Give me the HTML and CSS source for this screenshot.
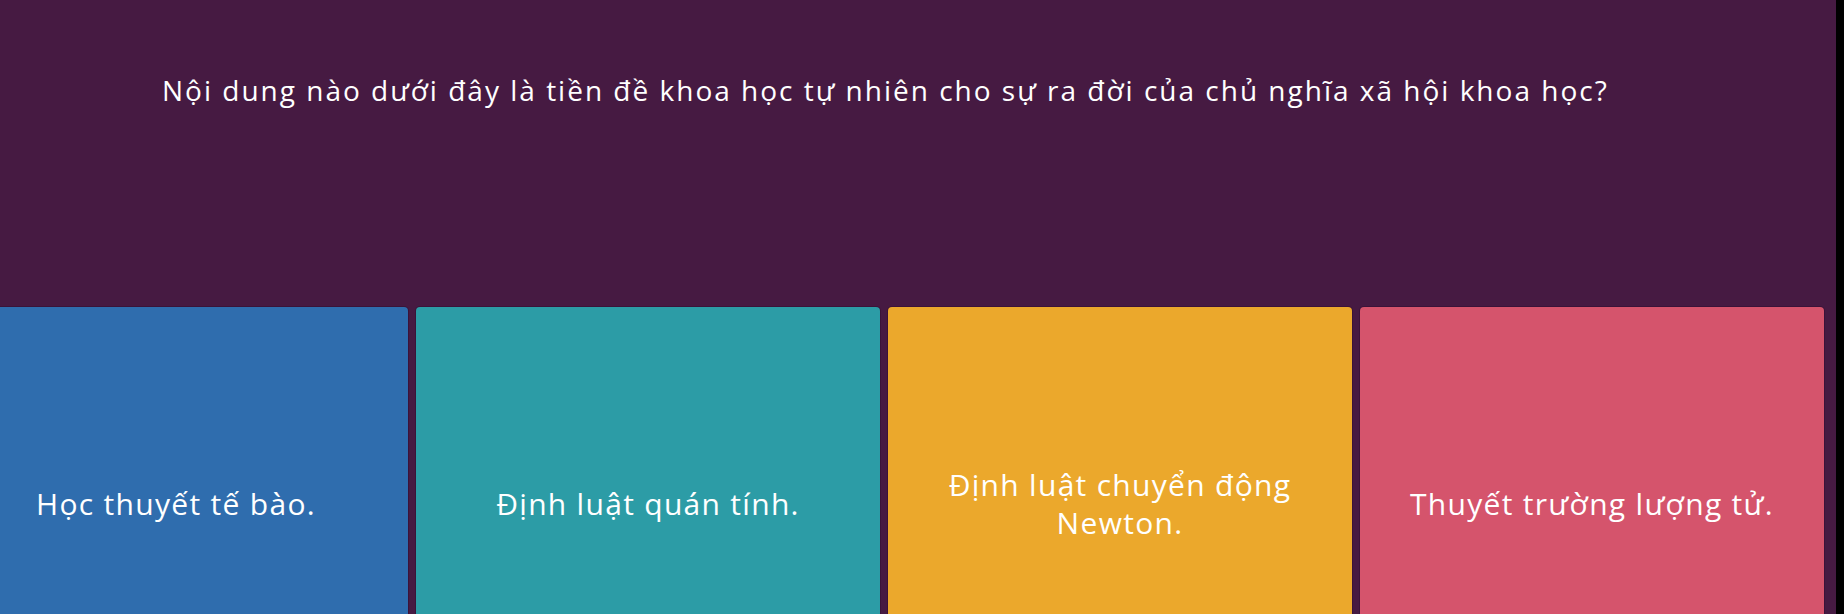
FILE: index.html
```html
<!DOCTYPE html>
<html lang="vi">
<head>
<meta charset="utf-8">
<title>Quiz</title>
<link rel="stylesheet" href="styles.css">
</head>
<body>
<div class="stage">
  <div class="question">
    <p class="question-text">Nội dung nào dưới đây là tiền đề khoa học tự nhiên cho sự ra đời của chủ nghĩa xã hội khoa học?</p>
  </div>
  <div class="options">
    <div class="option option-blue"><span>Học thuyết tế bào.</span></div>
    <div class="option option-teal"><span>Định luật quán tính.</span></div>
    <div class="option option-yellow"><span>Định luật chuyển động Newton.</span></div>
    <div class="option option-red"><span>Thuyết trường lượng tử.</span></div>
  </div>
</div>
<div class="edge"></div>
</body>
</html>
```

FILE: styles.css
```css
html, body {
  margin: 0;
  padding: 0;
  height: 100%;
}
body {
  display: flex;
  overflow: hidden;
  background: #461a42;
  font-family: "Open Sans", "Noto Sans", sans-serif;
  color: #ffffff;
}
.stage {
  flex: 1;
  display: flex;
  flex-direction: column;
  min-width: 0;
}
.edge {
  width: 8px;
  flex-shrink: 0;
  background: #000000;
}
.question {
  height: 307px;
  flex-shrink: 0;
  box-sizing: border-box;
  padding: 73px 0 0 162px;
}
.question-text {
  margin: 0;
  font-size: 28px;
  line-height: 34px;
  letter-spacing: 2px;
  white-space: nowrap;
}
.options {
  display: flex;
  gap: 8px;
  margin-left: -56px;
}
.option {
  flex: 0 0 464px;
  height: 393px;
  box-sizing: border-box;
  padding: 0 16px;
  border-radius: 4px 4px 0 0;
  display: flex;
  align-items: center;
  justify-content: center;
  text-align: center;
  font-size: 30px;
  line-height: 38px;
  letter-spacing: 1.3px;
  box-shadow: 0 0 0 1px rgba(40, 10, 40, 0.35);
}
.option-blue { background: #2f6dae; }
.option-teal { background: #2c9ca6; }
.option-yellow { background: #eba82c; }
.option-red { background: #d5546c; }
```
